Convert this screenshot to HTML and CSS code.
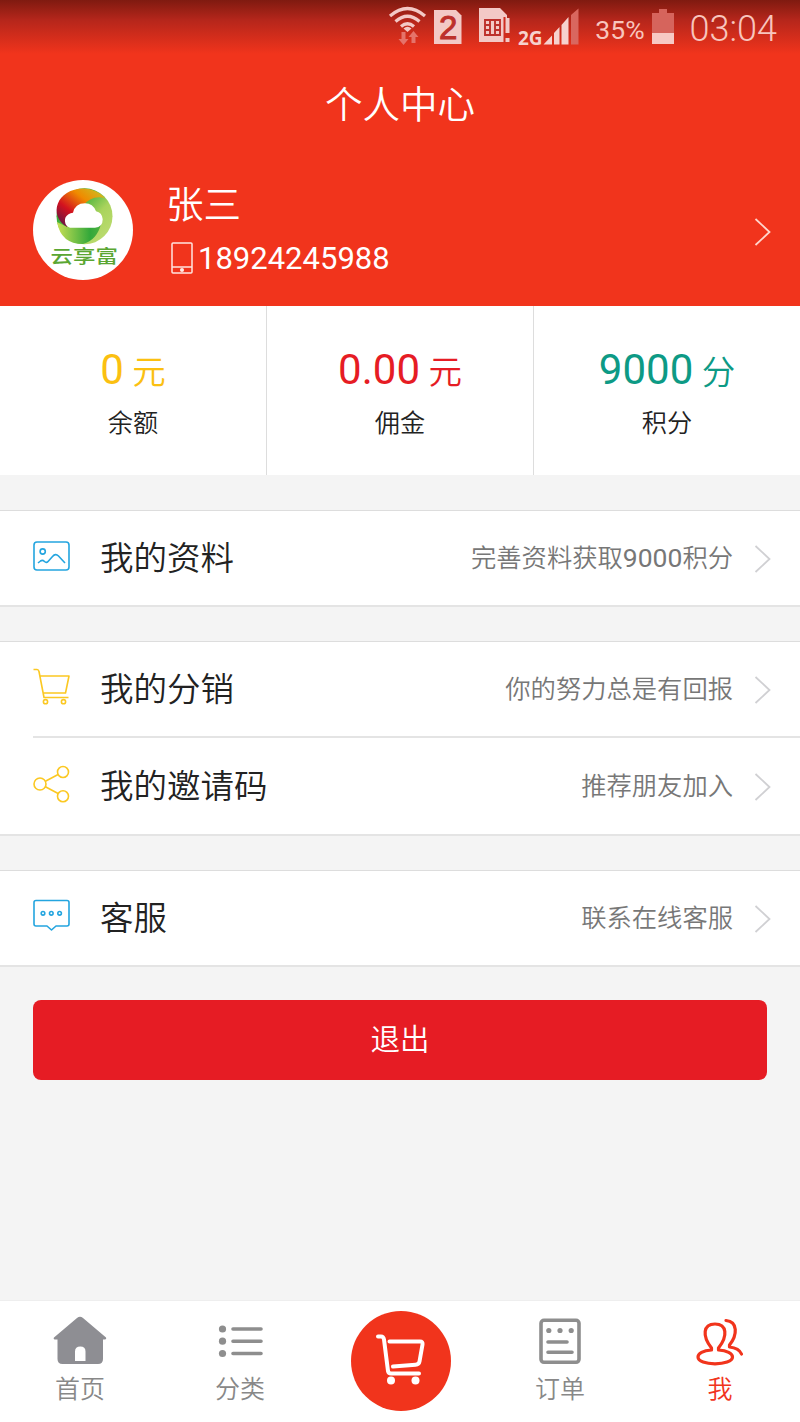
FILE: index.html
```html
<!DOCTYPE html>
<html lang="zh-CN">
<head>
    <meta charset="UTF-8">
    <meta name="viewport" content="width=device-width, initial-scale=1.0">
    <title>个人中心</title>
    <link rel="stylesheet" href="styles.css">
</head>
<body>
    <header class="header">
        <div class="status-bar">
            <svg class="status-icons" width="194" height="50" viewBox="386 0 194 50">
                <g fill="none" stroke="#f3c9c6" stroke-width="3.2">
                    <path d="M390 16Q407.500 1 425 16"/>
                    <path d="M395.500 21.500Q407.500 11 419.500 21.500"/>
                    <path d="M401 26.500Q407.500 21 414 26.500"/>
                </g>
                <path d="M403.500 28.500Q407.500 25 411.500 28.500L407.500 32z" fill="#f3c9c6"/>
                <path d="M401.500 32h4v7h3l-5 6-5-6h3zM411.500 43h4v-6h3l-5-6-5 6h3z" fill="#e5736a"/>
                <path d="M434 10h22l5.500 5.500V44H434z" fill="#f3c9c6"/>
                <text class="sim-number" x="439" y="38.500">2</text>
                <path d="M479 8h21l7 7v3h-3v24h-25z" fill="#f3c9c6"/>
                <path d="M485 20h15v15h-15zM485 25h5M495 25h5M485 30h5M495 30h5M490 20v15M495 20v15" fill="none" stroke="#bd302b" stroke-width="1.900"/>
                <path d="M503.500 17h2v26h-2z" fill="#cf2d20"/>
                <path d="M505.500 18h4v15h-4zM505.500 38h4v4h-4z" fill="#f3c9c6"/>
                <text class="network" x="518" y="44.500">2G</text>
                <path d="M543.500 44.500l8.500-9v9zM554 33l5.500-6v17.500H554zM561.500 25l7-8v27.500h-7z" fill="#f6d2ce"/>
                <path d="M571 15l7.500-6.500v36H571z" fill="#d9675f"/>
            </svg>
            <span class="percent">35%</span>
            <svg class="battery" width="22" height="36" viewBox="0 0 22 36">
                <path d="M7 0h8v4h7v20H0V4h7z" fill="#d6645c"/>
                <path d="M0 24h22v11H0z" fill="#f7c9c4"/>
            </svg>
            <span class="time">03:04</span>
        </div>
        <h1>个人中心</h1>
        <div class="user">
            <svg class="avatar" width="100" height="100" viewBox="0 0 100 100">
                <defs>
                    <linearGradient id="warm" x1="0" y1="1" x2="1" y2="0">
                        <stop offset="0" stop-color="#4b1650"/>
                        <stop offset=".35" stop-color="#d3121f"/>
                        <stop offset=".65" stop-color="#f08a00"/>
                        <stop offset="1" stop-color="#c5c82a"/>
                    </linearGradient>
                    <linearGradient id="leaf" x1="0" y1="0" x2="1" y2="1">
                        <stop offset=".3" stop-color="#3cae3b"/>
                        <stop offset=".6" stop-color="#a9d35c"/>
                        <stop offset="1" stop-color="#c3df77"/>
                    </linearGradient>
                    <linearGradient id="base" x1="0" y1="0" x2="1" y2="0">
                        <stop offset="0" stop-color="#c9df55"/>
                        <stop offset=".75" stop-color="#33a83a"/>
                        <stop offset="1" stop-color="#4db13f"/>
                    </linearGradient>
                </defs>
                <circle cx="50" cy="50" r="50" fill="#fff"/>
                <circle cx="51.500" cy="36.300" r="28" fill="url(#leaf)"/>
                <path d="M24 42Q28 64 50 64Q64 60 68 44L32 46z" fill="url(#base)"/>
                <path d="M34 47C15 36 23 8.500 51 8.500Q64 9 72 18Q58 15 50 26L38 36z" fill="url(#warm)"/>
                <path d="M37 47.700a7.500 7.500 0 0 1-1.500-13.500q2-1.500 4.500-1.500q2-9.500 12-9.500q8 0 11 8q6 1 6.700 8q0 8-7.700 8.500z" fill="#fff"/>
                <text class="logo-text" x="17.500" y="105" transform="scale(1 .79)">云享富</text>
            </svg>
            <div class="user-info">
                <p class="name">张三</p>
                <p class="phone">
                    <svg width="22" height="32" viewBox="0 0 22 32" fill="none" stroke="#ffe5df" stroke-width="1.500">
                        <rect x="1" y="1" width="20" height="30" rx="1"/>
                        <path d="M1 25h20"/>
                        <circle cx="11" cy="28" r="1.300" fill="#fff"/>
                    </svg>
                    <span>18924245988</span>
                </p>
            </div>
            <svg class="arrow" width="17" height="28" viewBox="0 0 17 28"><path d="M1.500 1l14 13-14 13"/></svg>
        </div>
    </header>

    <section class="stats">
        <div class="stat yellow">
            <p class="value">0 <span>元</span></p>
            <p class="label">余额</p>
        </div>
        <div class="stat red">
            <p class="value">0.00 <span>元</span></p>
            <p class="label">佣金</p>
        </div>
        <div class="stat green">
            <p class="value">9000 <span>分</span></p>
            <p class="label">积分</p>
        </div>
    </section>

    <ul class="menu">
        <li>
            <svg class="icon blue" width="38" height="38" viewBox="0 0 38 38">
                <rect x="1" y="5" width="35" height="28" rx="3"/>
                <circle cx="9.700" cy="14.500" r="2.600"/>
                <path d="M5 26l2.500-2q2-1.500 4 .5 2 2 4-.5l4-4.500q3-3.500 6-.5l6.500 7"/>
            </svg>
            <span class="title">我的资料</span>
            <span class="desc">完善资料获取<b>9000</b>积分</span>
            <svg class="arrow" width="17" height="28" viewBox="0 0 17 28"><path d="M1.500 1l14 13-14 13"/></svg>
        </li>
    </ul>

    <ul class="menu">
        <li>
            <svg class="icon yellow" width="38" height="38" viewBox="0 0 38 38">
                <path d="M.5 1.500h3.500q1.500 0 2 2l5 26h24.500M7 8h29l-3.500 17H10.500"/>
                <circle cx="12.500" cy="33.700" r="2.100"/>
                <circle cx="30.500" cy="33.700" r="2.100"/>
            </svg>
            <span class="title">我的分销</span>
            <span class="desc">你的努力总是有回报</span>
            <svg class="arrow" width="17" height="28" viewBox="0 0 17 28"><path d="M1.500 1l14 13-14 13"/></svg>
        </li>
        <li>
            <svg class="icon yellow" width="38" height="38" viewBox="0 0 38 38">
                <circle cx="7" cy="19" r="6"/>
                <circle cx="30" cy="7" r="5.500"/>
                <circle cx="30" cy="31.300" r="5.500"/>
                <path d="M12.400 16.200l12.700-6.700M12.400 21.800l12.700 6.700"/>
            </svg>
            <span class="title">我的邀请码</span>
            <span class="desc">推荐朋友加入</span>
            <svg class="arrow" width="17" height="28" viewBox="0 0 17 28"><path d="M1.500 1l14 13-14 13"/></svg>
        </li>
    </ul>

    <ul class="menu">
        <li>
            <svg class="icon blue" width="38" height="38" viewBox="0 0 38 38">
                <path d="M3 3.500h31q2 0 2 2v21.500q0 2-2 2H23l-4.500 4-4.500-4H3q-2 0-2-2V5.500q0-2 2-2z"/>
                <circle cx="10" cy="16.300" r="1.800"/>
                <circle cx="18.300" cy="16.300" r="1.800"/>
                <circle cx="26.600" cy="16.300" r="1.800"/>
            </svg>
            <span class="title">客服</span>
            <span class="desc">联系在线客服</span>
            <svg class="arrow" width="17" height="28" viewBox="0 0 17 28"><path d="M1.500 1l14 13-14 13"/></svg>
        </li>
    </ul>

    <button class="logout" type="button">退出</button>

    <nav class="tab-bar">
        <a class="tab">
            <svg width="54" height="50" viewBox="0 0 54 50">
                <path d="M24 2q3-2.300 6 0l23 19.500q.8 2-1.500 2H50V43q0 5-5 5H9.500q-5 0-5-5V23.500H2q-2-.5-1-2zM22 45h10.500V35.500q0-5-5.200-5T22 35.500z" fill="#8e8e93" fill-rule="evenodd"/>
            </svg>
            <span>首页</span>
        </a>
        <a class="tab">
            <svg width="54" height="50" viewBox="0 0 54 50">
                <g fill="#8e8e8e">
                    <circle cx="9.500" cy="13" r="3.600"/>
                    <circle cx="9.500" cy="25.200" r="3.600"/>
                    <circle cx="9.500" cy="37.500" r="3.600"/>
                </g>
                <path d="M20 13h28M20 25.200h28M20 37.500h28" stroke="#8e8e8e" stroke-width="3.600" stroke-linecap="round"/>
            </svg>
            <span>分类</span>
        </a>
        <a class="tab">
            <svg class="cart" width="100" height="100" viewBox="0 0 100 100">
                <circle cx="50" cy="50" r="50" fill="#f1341c"/>
                <g fill="none" stroke="#fff" stroke-width="4" stroke-linecap="round" stroke-linejoin="round">
                    <path d="M27 25.500h3q2.500 0 3 3L37 60q.5 2.500 3 2.500h28"/>
                    <path d="M38.500 30.500H69q3 0 2.500 3l-3 17q-.5 3-4 3.200L42 55.500"/>
                </g>
                <circle cx="40" cy="69.500" r="4" fill="#fff"/>
                <circle cx="64.500" cy="69.500" r="4" fill="#fff"/>
            </svg>
        </a>
        <a class="tab">
            <svg width="54" height="50" viewBox="0 0 54 50">
                <g fill="none" stroke="#8e8e8e" stroke-width="3.600" stroke-linecap="round">
                    <rect x="8" y="4.300" width="38" height="42" rx="3"/>
                    <path d="M15 26h19M15 36.300h24"/>
                </g>
                <g fill="#8e8e8e">
                    <circle cx="15.800" cy="14.500" r="2.600"/>
                    <circle cx="27" cy="14.500" r="2.600"/>
                    <circle cx="38.200" cy="14.500" r="2.600"/>
                </g>
            </svg>
            <span>订单</span>
        </a>
        <a class="tab active">
            <svg width="54" height="50" viewBox="0 0 54 50">
                <g fill="none" stroke="#f1341c" stroke-width="3.200" stroke-linecap="round" stroke-linejoin="round">
                    <path d="M18.500 34V32C9 20 10 8 22 8S35 20 25.500 32v2C34 34.500 39.500 37.500 39.500 41C39.500 45.500 31 47.800 22 47.800S5 45.500 5 41C5 37.500 10 34.500 18.500 34z"/>
                    <path d="M33 4.500C45 5.500 44.500 19 36.500 29v2Q46 32 48.500 38"/>
                </g>
            </svg>
            <span>我</span>
        </a>
    </nav>
</body>
</html>
```
FILE: styles.css
```css
* {
    box-sizing: border-box;
    margin: 0;
    padding: 0;
}
body {
    min-height: 1422px;
    display: flex;
    flex-direction: column;
    background-color: #f4f4f4;
    color: #222;
    font-family: Roboto, "Noto Sans CJK SC", sans-serif;
    font-weight: 350;
}
svg {
    display: block;
    flex-shrink: 0;
}
.header {
    height: 306px;
    background: linear-gradient(#7f1a10 0, #b5261b 20px, #f1341c 54px);
    color: white;
}
.status-bar {
    height: 56px;
    padding-right: 23px;
    display: flex;
    justify-content: flex-end;
    align-items: flex-start;
    color: #f8c5bd;
    font-weight: 400;
}
.status-icons {
    margin-right: 15px;
}
.sim-number {
    font-family: "Liberation Sans", sans-serif;
    font-size: 33px;
    fill: #bd302b;
    stroke: #bd302b;
}
.network {
    font-family: "Open Sans", sans-serif;
    font-size: 19px;
    font-weight: 700;
    fill: #f6d2ce;
}
.percent {
    font-size: 26.5px;
    line-height: 59px;
}
.battery {
    margin: 9px 16px 0 7px;
}
.time {
    font-size: 36px;
    line-height: 58px;
    font-weight: 350;
}
.header h1 {
    height: 96px;
    line-height: 98px;
    font-size: 37.5px;
    font-weight: 350;
    text-align: center;
}
.user {
    display: flex;
    align-items: center;
    padding: 27px 29px 0 33px;
}
.avatar {
    margin-top: -3px;
}
.user-info {
    flex: 1;
    margin-left: 33px;
}
.logo-text {
    font-size: 22.5px;
    font-weight: 500;
    fill: #5aa632;
}
.name {
    font-size: 37.5px;
    line-height: 52px;
}
.phone {
    display: flex;
    align-items: center;
    gap: 5px;
    padding: 2px 0 0 5px;
    height: 52px;
    font-size: 31px;
    font-weight: 400;
}
.arrow {
    fill: none;
    stroke: #d0d0d3;
    stroke-width: 1.8;
    margin-top: 2px;
}
.user .arrow {
    stroke: #ffd5cc;
}
.stats {
    display: flex;
    height: 169px;
    background-color: white;
}
.stat {
    flex: 1;
    padding-top: 34px;
    text-align: center;
    border-right: 1px solid #ddd;
}
.stat:last-child {
    border-right: none;
}
.stat .value {
    font-size: 42px;
    font-weight: 400;
    line-height: 60px;
    height: 60px;
    word-spacing: -2px;
}
.stat .value span {
    font-size: 33.5px;
    font-weight: 350;
}
.stat .label {
    font-size: 25.2px;
    line-height: 47px;
}
.stat.yellow .value {
    color: #fbc011;
}
.stat.red .value {
    color: #e61c24;
}
.stat.green .value {
    color: #0d9a85;
}
.menu {
    margin-top: 35px;
    background-color: white;
    border-top: 1px solid #ddd;
    border-bottom: 2px solid #e4e4e4;
    list-style: none;
}
.menu + .menu {
    margin-top: 34px;
}
.menu li {
    display: flex;
    align-items: center;
    height: 94px;
    margin-left: 33px;
    padding-right: 29px;
}
.menu li + li {
    height: 98px;
    border-top: 2px solid #e4e4e4;
}
.icon {
    fill: none;
    stroke-width: 1.6;
    stroke-linejoin: round;
    margin-top: -4px;
}
.icon.blue {
    stroke: #24a5df;
}
.icon.yellow {
    stroke: #fbc822;
}
.title {
    flex: 1;
    margin: -5px 0 0 29px;
    font-size: 33.5px;
}
.desc {
    margin: -4px 21px 0 0;
    font-size: 25.3px;
    color: #777;
}
.desc b {
    font-size: 26.5px;
    font-weight: 400;
}
.logout {
    height: 80px;
    margin: 33px 33px 0;
    padding-bottom: 6px;
    border: none;
    border-radius: 8px;
    background-color: #e61c24;
    color: white;
    font-family: inherit;
    font-size: 29.5px;
    font-weight: 350;
}
.tab-bar {
    display: flex;
    height: 122px;
    margin-top: auto;
    background-color: white;
    border-top: 1px solid #eee;
}
.tab {
    flex: 1;
    display: flex;
    flex-direction: column;
    align-items: center;
    padding-top: 15px;
    color: #888;
    font-size: 25px;
    line-height: 47px;
}
.cart {
    margin: -5px 0 0 2px;
}
.tab.active {
    color: #f1341c;
}
```
